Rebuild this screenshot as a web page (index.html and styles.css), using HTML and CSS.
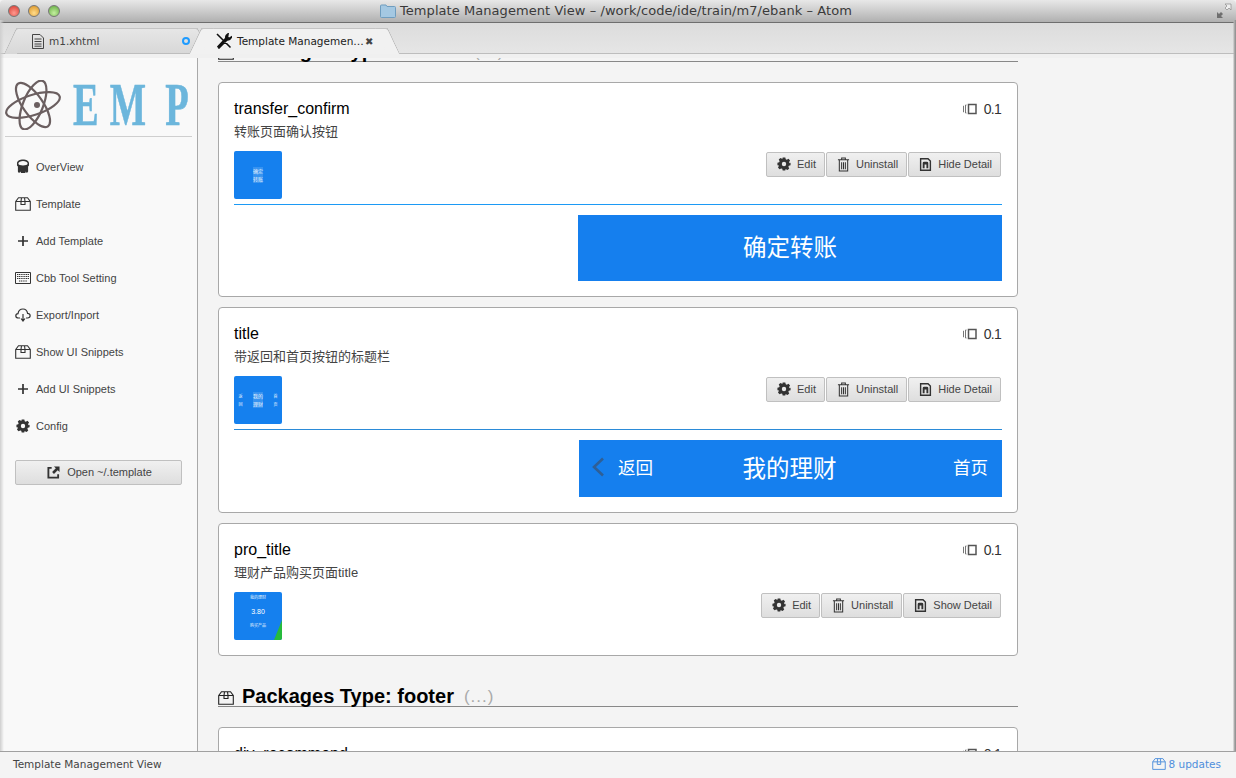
FILE: index.html
```html
<!DOCTYPE html>
<html lang="en">
<head>
    <meta charset="UTF-8">
    <title>Template Management View - Atom</title>
    <link rel="stylesheet" href="styles.css">
</head>
<body>

<svg class="defs" width="0" height="0">
    <symbol id="i-package" viewBox="0 0 16 14">
        <path d="M0.7 4.5 L3.5 0.7 H12.5 L15.3 4.5 V13.3 H0.7 Z M0.7 4.5 H15.3 M6.5 0.7 L6 4.5 V7.5 H10 V4.5 L9.5 0.7" fill="none" stroke="currentColor" stroke-width="1.1"/>
    </symbol>
    <symbol id="i-plus" viewBox="0 0 12 12">
        <path d="M6 1 V11 M1 6 H11" fill="none" stroke="currentColor" stroke-width="1.7"/>
    </symbol>
    <symbol id="i-gear" viewBox="0 0 16 16">
        <path fill-rule="evenodd" fill="currentColor" d="M6.5 0.5 H9.5 L10 2.6 L11.2 3.1 L13.1 2 L14.9 3.9 L13.8 5.8 L14.3 7 L15.5 6.6 V9.4 L13.5 9.9 L13 11.1 L14 13.1 L12.1 14.9 L10.2 13.9 L9.5 14.2 V15.5 H6.5 L6 13.5 L4.8 13 L2.9 14 L1.1 12.1 L2.1 10.2 L1.7 9.4 L0.5 9.4 V6.6 L2.5 6 L3 4.8 L2 2.9 L3.9 1.1 L5.8 2.1 L6 2.6 Z M8 5.5 A2.5 2.5 0 1 0 8 10.5 A2.5 2.5 0 1 0 8 5.5 Z"/>
    </symbol>
    <symbol id="i-trash" viewBox="0 0 14 16">
        <path d="M1 3 H13 M5 3 V1 H9 V3 M2.5 3 V15 H11.5 V3 M5 5.5 V13 M7 5.5 V13 M9 5.5 V13" fill="none" stroke="currentColor" stroke-width="1.1"/>
    </symbol>
    <symbol id="i-sim" viewBox="0 0 14 16">
        <path fill-rule="evenodd" fill="currentColor" d="M1 1 H10 L13 4 V15 H1 Z M2.5 2.5 V13.5 H11.5 V4.6 L9.4 2.5 Z M4 12 V6.5 Q4 5 5.5 5 H8.5 Q10 5 10 6.5 V12 H8 V8 H6 V12 Z"/>
    </symbol>
    <symbol id="i-versions" viewBox="0 0 14 12">
        <path d="M5.5 1.5 H13 V10.5 H5.5 Z" fill="none" stroke="#555" stroke-width="1.5"/>
        <path d="M3.5 2 H2.5 V10 H3.5 M1 3 H0.5 V9 H1" fill="none" stroke="#777" stroke-width="1"/>
    </symbol>
    <symbol id="i-keyboard" viewBox="0 0 16 12">
        <path d="M0.5 0.5 H15.5 V11.5 H0.5 Z" fill="none" stroke="currentColor"/>
        <path d="M2 2.5 H14 M2 4.5 H14 M2 6.5 H14 M4 9 H12" fill="none" stroke="currentColor" stroke-width="1.2" stroke-dasharray="1.2 .6"/>
    </symbol>
    <symbol id="i-cloud" viewBox="0 0 16 14">
        <path d="M5 10 H3.5 C0 10 0 6 3 5.6 C3.6 2 6.2 1 8 1 C10.5 1 12.2 3 12.6 5.4 C16 5.8 16 10 12.5 10 H11 M8 6 V12.5 M6 10.5 L8 13 L10 10.5" fill="none" stroke="currentColor" stroke-width="1.2"/>
    </symbol>
    <symbol id="i-bucket" viewBox="0 0 14 16">
        <path fill-rule="evenodd" fill="currentColor" d="M7 0.5 C10.5 0.5 13.5 2 13.5 4.5 V7 L12.5 8 V13.5 C11.5 15.5 10.5 15 10 13.5 L9.5 15 H5 L4 13.5 C3.5 15.5 2 15 1.5 13.5 V8 L0.5 7 V4.5 C0.5 2 3.5 0.5 7 0.5 Z M7 2 C4.5 2 2 3 2 5 C2 6.4 4.5 6.8 7 6.8 C9.5 6.8 12 6.4 12 5 C12 3 9.5 2 7 2 Z"/>
    </symbol>
    <symbol id="i-external" viewBox="0 0 14 14">
        <path d="M5 2 H1.5 V12.5 H12 V9" fill="none" stroke="currentColor" stroke-width="2"/>
        <path fill="currentColor" d="M7.5 0.5 H13.5 V6.5 L11.5 4.5 L7.5 8.5 L5.5 6.5 L9.5 2.5 Z"/>
    </symbol>
</svg>

<div class="window">
    <div class="titlebar">
        <div class="lights">
            <span class="light red"></span>
            <span class="light yellow"></span>
            <span class="light green"></span>
        </div>
        <div class="win-title">
            <svg class="folder" width="16" height="14" viewBox="0 0 16 14"><path d="M0.5 2 Q0.5 1 1.5 1 H6 L7 2.5 H14.5 Q15.5 2.5 15.5 3.5 V12.5 Q15.5 13.5 14.5 13.5 H1.5 Q0.5 13.5 0.5 12.5 Z" fill="#a4c8e2" stroke="#6f9dbf"/></svg>
            <span>Template Management View – /work/code/ide/train/m7/ebank – Atom</span>
        </div>
        <svg class="fullscreen" width="16" height="16" viewBox="0 0 16 16"><path d="M9 1 H15 V7 L13 5 L11 7 L9 5 L11 3 Z" fill="#eee" stroke="#8a8a8a" stroke-width=".7"/><path d="M7 15 H1 V9 L3 11 L5 9 L7 11 L5 13 Z" fill="#6f6f6f"/></svg>
    </div>

    <div class="tabbar">
        <div class="tab first-tab">
            <svg class="tab-icon" width="12" height="15" viewBox="0 0 12 15"><path d="M0.5 0.5 H8 L11.5 4 V14.5 H0.5 Z M2.5 5 H9.5 M2.5 7.5 H9.5 M2.5 10 H9.5 M2.5 12.2 H9.5" fill="none" stroke="#444"/></svg>
            <span class="tab-name">m1.xhtml</span>
            <span class="modified"></span>
        </div>
        <div class="tab active">
            <svg class="tab-icon" width="16" height="16" viewBox="0 0 16 16"><path d="M1 1 L14.5 14.5 M12 1 Q9 3 10 5 L2 13.5 L3 15 L11 7 Q14 7.5 15.5 4 L13 5.5 L11.5 4 Z" fill="#111" stroke="#111" stroke-width="1.6"/></svg>
            <span class="tab-name">Template Managemen…</span>
            <span class="tab-close">✖</span>
        </div>
    </div>

    <div class="workspace">
        <aside class="sidebar">
            <div class="logo">
                <svg class="atom" width="58" height="50" viewBox="0 0 58 50">
                    <g fill="none" stroke="#6b5f60" stroke-width="2.2">
                        <ellipse cx="28" cy="25" rx="28" ry="10" transform="rotate(-18 28 25)"/>
                        <ellipse cx="28" cy="25" rx="26" ry="10" transform="rotate(55 28 25)"/>
                        <ellipse cx="28" cy="25" rx="26" ry="10" transform="rotate(112 28 25)"/>
                    </g>
                    <circle cx="32" cy="25" r="3" fill="#6b5f60"/>
                </svg>
                <div class="logo-text"><span class="logo-e">E</span><span class="logo-m">M</span><span>P</span></div>
            </div>
            <ul class="side-nav">
                <li><svg class="ni" width="13" height="15"><use href="#i-bucket"/></svg>OverView</li>
                <li><svg class="ni" width="16" height="14"><use href="#i-package"/></svg>Template</li>
                <li><svg class="ni" width="12" height="12"><use href="#i-plus"/></svg>Add Template</li>
                <li><svg class="ni" width="16" height="12"><use href="#i-keyboard"/></svg>Cbb Tool Setting</li>
                <li><svg class="ni" width="16" height="14"><use href="#i-cloud"/></svg>Export/Inport</li>
                <li><svg class="ni" width="16" height="14"><use href="#i-package"/></svg>Show UI Snippets</li>
                <li><svg class="ni" width="12" height="12"><use href="#i-plus"/></svg>Add UI Snippets</li>
                <li><svg class="ni" width="14" height="14"><use href="#i-gear"/></svg>Config</li>
            </ul>
            <button class="btn open-btn"><svg width="13" height="13"><use href="#i-external"/></svg>Open ~/.template</button>
        </aside>

        <main class="content">
            <h2 class="pkg-head first">
                <svg class="pkg-icon" width="16" height="14"><use href="#i-package"/></svg>
                <span class="pkg-name">Packages Type: normal</span>
                <span class="more">(...)</span>
            </h2>

            <div class="card">
                <div class="card-top">
                    <div class="card-name">transfer_confirm</div>
                    <div class="version"><svg width="14" height="12"><use href="#i-versions"/></svg>0.1</div>
                </div>
                <div class="card-desc">转账页面确认按钮</div>
                <div class="card-row">
                    <div class="thumb"><span class="t-mid">确定转账</span></div>
                    <div class="actions">
                        <button class="btn"><svg width="14" height="14"><use href="#i-gear"/></svg>Edit</button>
                        <button class="btn"><svg width="13" height="15"><use href="#i-trash"/></svg>Uninstall</button>
                        <button class="btn"><svg width="13" height="15"><use href="#i-sim"/></svg>Hide Detail</button>
                    </div>
                </div>
                <div class="detail">
                    <div class="preview confirm">确定转账</div>
                </div>
            </div>

            <div class="card">
                <div class="card-top">
                    <div class="card-name">title</div>
                    <div class="version"><svg width="14" height="12"><use href="#i-versions"/></svg>0.1</div>
                </div>
                <div class="card-desc">带返回和首页按钮的标题栏</div>
                <div class="card-row">
                    <div class="thumb spread"><span class="t-side">返回</span><span class="t-mid">我的理财</span><span class="t-side">首页</span></div>
                    <div class="actions">
                        <button class="btn"><svg width="14" height="14"><use href="#i-gear"/></svg>Edit</button>
                        <button class="btn"><svg width="13" height="15"><use href="#i-trash"/></svg>Uninstall</button>
                        <button class="btn"><svg width="13" height="15"><use href="#i-sim"/></svg>Hide Detail</button>
                    </div>
                </div>
                <div class="detail dark">
                    <div class="preview titlebar-pre">
                        <div class="pre-left">
                            <svg width="14" height="20" viewBox="0 0 14 20"><path d="M12 1.5 L3 10 L12 18.5" fill="none" stroke="#2f5f96" stroke-width="2.6"/></svg>
                            <span class="pre-side">返回</span>
                        </div>
                        <span class="pre-mid">我的理财</span>
                        <span class="pre-side pre-right">首页</span>
                    </div>
                </div>
            </div>

            <div class="card">
                <div class="card-top">
                    <div class="card-name">pro_title</div>
                    <div class="version"><svg width="14" height="12"><use href="#i-versions"/></svg>0.1</div>
                </div>
                <div class="card-desc">理财产品购买页面title</div>
                <div class="card-row">
                    <div class="thumb stack"><span>我的理财</span><span class="t-big">3.80</span><span>购买产品</span><i class="corner"></i></div>
                    <div class="actions">
                        <button class="btn"><svg width="14" height="14"><use href="#i-gear"/></svg>Edit</button>
                        <button class="btn"><svg width="13" height="15"><use href="#i-trash"/></svg>Uninstall</button>
                        <button class="btn"><svg width="13" height="15"><use href="#i-sim"/></svg>Show Detail</button>
                    </div>
                </div>
            </div>

            <h2 class="pkg-head">
                <svg class="pkg-icon" width="16" height="14"><use href="#i-package"/></svg>
                <span class="pkg-name">Packages Type: footer</span>
                <span class="more">(...)</span>
            </h2>

            <div class="card">
                <div class="card-top">
                    <div class="card-name">div_recommend</div>
                    <div class="version"><svg width="14" height="12"><use href="#i-versions"/></svg>0.1</div>
                </div>
            </div>
        </main>
    </div>

    <div class="statusbar">
        <span>Template Management View</span>
        <span class="updates"><svg width="14" height="12"><use href="#i-package"/></svg>8 updates</span>
    </div>
</div>

</body>
</html>
```

FILE: styles.css
```css
* {
    box-sizing: border-box;
}
body {
    margin: 0;
    font-family: "Liberation Sans", Arial, sans-serif;
    background-color: #f4f4f4;
}
.defs {
    position: absolute;
}
.window {
    position: relative;
    width: 1236px;
    height: 778px;
    display: flex;
    flex-direction: column;
    overflow: hidden;
}
/* dark edges of the window */
.window::after {
    content: "";
    position: absolute;
    top: 20px;
    bottom: 0;
    left: 0;
    right: 0;
    pointer-events: none;
    background: linear-gradient(to right, #cfcfcf, rgba(255, 255, 255, 0) 4px), linear-gradient(to left, #8a8a8a, #b5b5b5 2px, rgba(255, 255, 255, 0) 3px);
}

/* title bar */
.titlebar {
    height: 23px;
    flex: none;
    display: flex;
    align-items: center;
    position: relative;
    background: linear-gradient(#e8e8e8, #b0b0b0);
    border-bottom: 1px solid #6e6e6e;
    border-radius: 4px 4px 0 0;
}
.lights {
    display: flex;
    gap: 8px;
    margin-left: 8px;
}
.light {
    width: 12px;
    height: 12px;
    border-radius: 50%;
    border: 1px solid #777;
}
.red { background: radial-gradient(circle at 50% 70%, #ff9a90, #d6362c); }
.yellow { background: radial-gradient(circle at 50% 70%, #ffdc8c, #d88e1c); }
.green { background: radial-gradient(circle at 50% 70%, #c4efa0, #5da83a); }
.win-title {
    position: absolute;
    left: 380px;
    top: 3px;
    display: flex;
    align-items: center;
    gap: 4px;
    font-family: "DejaVu Sans", sans-serif;
    font-size: 13px;
    letter-spacing: .06px;
    color: #3a3a3a;
    white-space: nowrap;
}
.fullscreen {
    margin-left: auto;
    margin-right: 4px;
    align-self: flex-start;
    margin-top: 3px;
}

/* tabs */
.tabbar {
    height: 35px;
    flex: none;
    display: flex;
    padding: 5px 0 0 16px;
    background: linear-gradient(#dcdcdc, #e6e6e6);
    border-bottom: 4px solid #f0f0f0;
    box-shadow: inset 0 -1px 0 #bdbdbd;
    position: relative;
}
.tab {
    width: 187px;
    height: 26px;
    display: flex;
    align-items: center;
    position: relative;
    z-index: 1;
    padding: 0 0 0 15px;
    font-family: "DejaVu Sans", sans-serif;
    font-size: 10.5px;
    color: #444;
    background: linear-gradient(#e6e6e6, #d8d8d8);
    border-top: 1px solid #c4c4c4;
    border-bottom: 1px solid #bdbdbd;
}
.first-tab {
    width: 182px;
    margin-right: 3px;
}
.tab::before, .tab::after {
    content: "";
    position: absolute;
    top: -1px;
    bottom: -1px;
    width: 12px;
    background: inherit;
    border-top: 1px solid #c4c4c4;
    z-index: -1;
}
.tab::before {
    left: -6px;
    transform: skewX(-25deg);
    border-left: 1px solid #b5b5b5;
    border-radius: 3px 0 0 0;
}
.tab::after {
    right: -6px;
    transform: skewX(25deg);
    border-right: 1px solid #b5b5b5;
    border-radius: 0 3px 0 0;
}
.tab.active {
    z-index: 2;
    color: #222;
    background: #f1f1f1;
    border-bottom: 1px solid #f1f1f1;
}
.tab-icon {
    margin-right: 5px;
    flex: none;
}
.first-tab .tab-icon {
    margin-left: 1px;
}
.tab-name {
    flex: 1;
    min-width: 0;
    white-space: nowrap;
}
.modified {
    width: 8px;
    height: 8px;
    border: 2px solid #1e9bff;
    border-radius: 50%;
    margin-right: 8px;
}
.tab-close {
    flex: none;
    width: 10px;
    overflow: hidden;
    font-size: 10px;
    color: #444;
    margin-right: 13px;
}

/* layout */
.workspace {
    flex: 1;
    display: flex;
    min-height: 0;
}
.sidebar {
    width: 198px;
    flex: none;
    background-color: #f9f9f9;
    border-right: 1px solid #a9a9a9;
    padding-top: 21px;
}
.logo {
    height: 58px;
    margin: 0 5px;
    display: flex;
    align-items: flex-start;
    border-bottom: 1px solid #cfcfcf;
}
.atom {
    flex: none;
    margin-top: 1px;
}
.logo-text {
    display: flex;
    margin-left: 10px;
    font-family: "Liberation Serif", serif;
    font-weight: bold;
    font-size: 62px;
    line-height: 50px;
    color: #6cb6dc;
    -webkit-text-stroke: .6px #6cb6dc;
    transform: scaleX(.62);
    transform-origin: left center;
    white-space: nowrap;
}
.logo-e {
    margin-right: 18px;
}
.logo-m {
    margin-right: 31px;
}
.side-nav {
    list-style: none;
    margin: 11px 0 0;
    padding: 0;
}
.side-nav li {
    height: 37px;
    display: flex;
    align-items: center;
    position: relative;
    padding-left: 36px;
    font-size: 11px;
    color: #444;
}
.ni {
    position: absolute;
    left: 23px;
    transform: translateX(-50%);
    color: #333;
}
.btn {
    height: 25px;
    display: inline-flex;
    align-items: center;
    justify-content: center;
    gap: 6px;
    padding: 0 8px 1px 10px;
    font-family: "Liberation Sans", Arial, sans-serif;
    font-size: 11px;
    color: #444;
    background: linear-gradient(#f0f0f0, #dedede);
    border: 1px solid #c0c0c0;
    border-radius: 2px;
}
.btn svg {
    color: #333;
}
.open-btn {
    display: flex;
    width: 167px;
    margin: 16px 0 0 15px;
    gap: 7px;
}

/* main column */
.content {
    flex: 1;
    overflow: hidden;
    padding: 0 218px 0 20px;
    background-color: #f4f4f4;
}
.pkg-head {
    height: 26px;
    margin: 25px 0 20px;
    display: flex;
    align-items: flex-end;
    gap: 8px;
    font-size: 20px;
    line-height: 24px;
    color: #000;
    border-bottom: 1px solid #888;
    white-space: nowrap;
}
.pkg-head.first {
    margin-top: -22px;
}
.pkg-icon {
    margin-bottom: 1px;
    color: #222;
}
.pkg-name {
    margin-bottom: -2px;
}
.more {
    font-size: 17px;
    font-weight: normal;
    color: #aaa;
    margin-left: 2px;
    margin-bottom: -2px;
    letter-spacing: 1px;
    line-height: 22px;
}
.card {
    background-color: white;
    border: 1px solid #a8a8a8;
    border-radius: 4px;
    padding: 15px;
    margin-bottom: 10px;
}
.card-top {
    display: flex;
    justify-content: space-between;
    height: 25px;
    padding-top: 1px;
}
.card-name {
    font-size: 16px;
    line-height: 20px;
    color: #000;
}
.version {
    display: flex;
    align-items: center;
    gap: 7px;
    height: 22px;
    font-size: 14px;
    letter-spacing: -.7px;
    color: #333;
    margin-right: 1px;
    margin-top: -1px;
}
.card-desc {
    font-family: "Liberation Sans", "Noto Sans CJK SC", sans-serif;
    font-size: 13px;
    line-height: 18px;
    color: #444;
}
.card-row {
    display: flex;
    justify-content: space-between;
    margin-top: 10px;
}
.thumb {
    width: 48px;
    height: 48px;
    position: relative;
    display: flex;
    align-items: center;
    justify-content: center;
    background-color: #1580ee;
    border-radius: 2px;
    color: #e6f2fd;
    font-family: "Noto Sans CJK SC", sans-serif;
    font-size: 5px;
    line-height: 8px;
    text-align: center;
    overflow: hidden;
}
.t-mid {
    width: 10px;
    background-color: rgba(255, 255, 255, .15);
}
.spread {
    justify-content: space-between;
    padding: 0 4px;
}
.t-side {
    width: 5px;
    font-size: 4px;
}
.stack {
    flex-direction: column;
    justify-content: flex-start;
    padding-top: 2px;
    font-size: 4px;
    line-height: 6px;
}
.t-big {
    margin: 9px 0 7px;
    font-size: 7px;
    font-family: "Liberation Sans", sans-serif;
    color: white;
}
.corner {
    position: absolute;
    right: 0;
    bottom: 0;
    width: 8px;
    height: 20px;
    background-color: #26bb3c;
    clip-path: polygon(100% 0, 100% 100%, 0 100%);
}
.actions {
    display: flex;
    gap: 1px;
    height: 25px;
    margin: 1px 1px 0 0;
}
.detail {
    margin-top: 5px;
    padding-top: 10px;
    border-top: 1px solid #1c9af5;
}
.detail.dark {
    border-top-color: #2b8bd8;
}
.preview {
    margin-left: auto;
    background-color: #157fee;
    color: white;
    font-family: "Noto Sans CJK SC", sans-serif;
}
.confirm {
    width: 424px;
    height: 66px;
    display: flex;
    align-items: center;
    justify-content: center;
    padding-bottom: 4px;
    font-size: 23.5px;
}
.titlebar-pre {
    width: 423px;
    height: 57px;
    display: grid;
    grid-template-columns: 1fr auto 1fr;
    align-items: center;
    padding: 0 14px 4px 12px;
}
.pre-left {
    display: flex;
    align-items: center;
    gap: 13px;
}
.pre-side {
    font-size: 17.5px;
}
.pre-mid {
    font-size: 23.5px;
}
.pre-right {
    text-align: right;
}

/* status bar */
.statusbar {
    height: 27px;
    flex: none;
    position: relative;
    z-index: 1;
    display: flex;
    justify-content: space-between;
    align-items: center;
    padding: 0 15px 2px 13px;
    background-color: #f4f4f4;
    border-top: 1px solid #a0a0a0;
    font-family: "DejaVu Sans", sans-serif;
    font-size: 10.5px;
    color: #444;
}
.updates {
    display: flex;
    align-items: center;
    gap: 3px;
    color: #4f8fdc;
}
```
